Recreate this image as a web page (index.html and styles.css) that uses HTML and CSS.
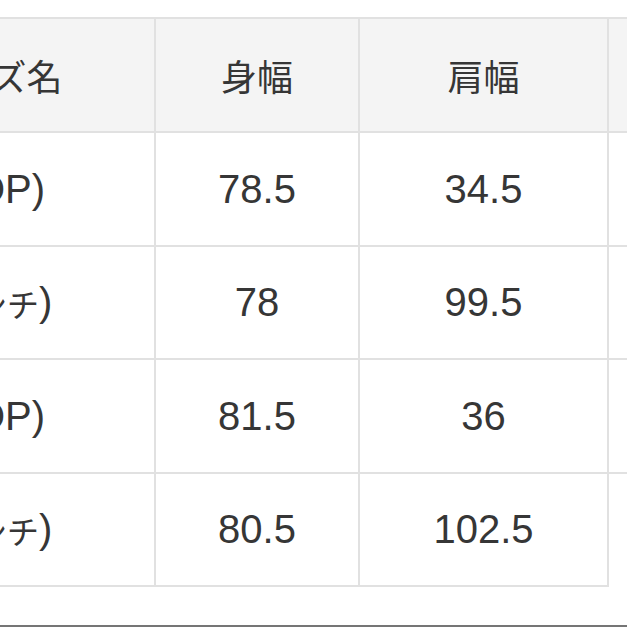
FILE: index.html
```html
<!DOCTYPE html>
<html lang="ja">
<head>
<meta charset="utf-8">
<title>サイズ表</title>
<link rel="stylesheet" href="styles.css">
</head>
<body>
<div class="page">
  <div class="size-table">
    <div class="cell head">サイズ名</div>
    <div class="cell head">身幅</div>
    <div class="cell head">肩幅</div>
    <div class="cell head">着丈</div>

    <div class="cell">(TOP)</div>
    <div class="cell">78.5</div>
    <div class="cell">34.5</div>
    <div class="cell">60</div>

    <div class="cell">(<span class="kana">インチ</span>)</div>
    <div class="cell">78</div>
    <div class="cell">99.5</div>
    <div class="cell">30</div>

    <div class="cell">(TOP)</div>
    <div class="cell">81.5</div>
    <div class="cell">36</div>
    <div class="cell">62</div>

    <div class="cell">(<span class="kana">インチ</span>)</div>
    <div class="cell">80.5</div>
    <div class="cell">102.5</div>
    <div class="cell cut">31</div>
  </div>
  <div class="rule"></div>
</div>
</body>
</html>
```

FILE: styles.css
```css
html, body {
  margin: 0;
  padding: 0;
  background: #ffffff;
  overflow: hidden;
}

.page {
  width: 627px;
  height: 627px;
  overflow: hidden;
  padding-top: 17px;
  box-sizing: border-box;
  display: flex;
  flex-direction: column;
}

.size-table {
  margin-left: -172px;
  width: 981px;
  display: grid;
  grid-template-columns: 328px 204px 249px 200px;
  grid-template-rows: 114px 114px 113px 114px 113px;
  border-top: 2px solid #e1e1e1;
  font-family: "Liberation Sans", "Noto Sans CJK JP", sans-serif;
  color: #363636;
  font-size: 40px;
}

.cell {
  box-sizing: border-box;
  border-right: 2px solid #e1e1e1;
  border-bottom: 2px solid #e1e1e1;
  display: flex;
  align-items: center;
  justify-content: center;
  white-space: nowrap;
  background: #ffffff;
}

.cell.head {
  background: #f4f4f4;
  font-size: 36px;
}

.kana {
  font-size: 32px;
}

.cell.cut {
  border-bottom-color: transparent;
}

.rule {
  margin-top: 38px;
  width: 627px;
  height: 2px;
  background: #757575;
  flex: none;
}
```
